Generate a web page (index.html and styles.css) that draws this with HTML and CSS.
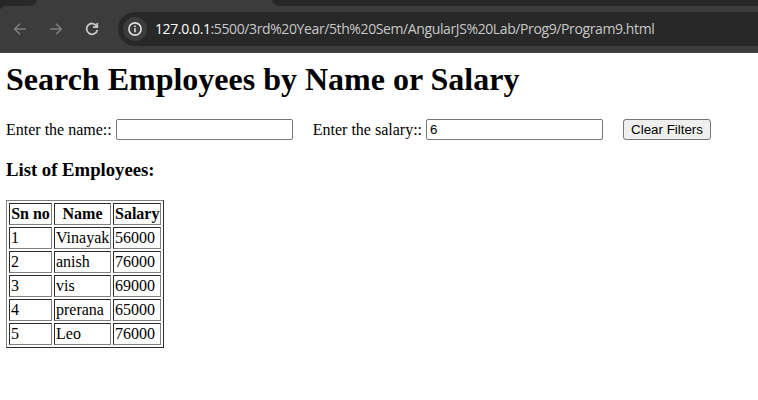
FILE: index.html
```html
<!DOCTYPE html>
<html lang="en">
<head>
<meta charset="utf-8">
<title>Search Employees</title>
<link rel="stylesheet" href="styles.css">
</head>
<body>
<header class="browser">
  <div class="tabs"><span class="tab-left"></span><span class="tab-right"></span></div>
  <div class="toolbar">
    <svg class="nav" viewBox="0 0 16 16"><path d="M14 8H3M8 2.7 2.7 8 8 13.3"/></svg>
    <svg class="nav" viewBox="0 0 16 16"><path d="M2 8h11M8 2.7 13.3 8 8 13.3"/></svg>
    <svg class="nav reload" viewBox="0 0 16 16"><path d="M12.7 5.2A5.4 5.4 0 1 0 13.3 9M13.3 2v4.2H9"/></svg>
    <div class="address">
      <span class="info"><svg viewBox="0 0 16 16"><circle cx="8" cy="8" r="6.1"/><path d="M8 7.3v4M8 4.6v1.6"/></svg></span>
      <span class="url"><span class="host">127.0.0.1</span>:5500/3rd%20Year/5th%20Sem/AngularJS%20Lab/Prog9/Program9.html</span>
    </div>
  </div>
</header>
<main>
  <h1>Search Employees by Name or Salary</h1>
  <div class="filters">
    <label>Enter the name:: <input type="text"></label>
    <label>Enter the salary:: <input type="text" value="6"></label>
    <button>Clear Filters</button>
  </div>
  <h3>List of Employees:</h3>
  <table border="1">
    <colgroup><col class="col-no"><col class="col-name"><col class="col-salary"></colgroup>
    <tr><th>Sn no</th><th>Name</th><th>Salary</th></tr>
    <tr><td>1</td><td>Vinayak</td><td>56000</td></tr>
    <tr><td>2</td><td>anish</td><td>76000</td></tr>
    <tr><td>3</td><td>vis</td><td>69000</td></tr>
    <tr><td>4</td><td>prerana</td><td>65000</td></tr>
    <tr><td>5</td><td>Leo</td><td>76000</td></tr>
  </table>
</main>
</body>
</html>
```

FILE: styles.css
```css
body {
  margin: 0;
  background: #fff;
  color: #000;
  font: 16px "Liberation Serif", serif;
  overflow: hidden;
}
.browser {
  height: 53px;
  box-sizing: border-box;
  border-bottom: 1px solid #454545;
  background: radial-gradient(circle at 7px 7px, transparent 7px, #282828 7.5px) 0 6px / 7px 3px no-repeat #3c3c3c;
}
.tabs {
  display: flex;
  justify-content: space-between;
  height: 6px;
}
.tab-left {
  width: 37px;
  background: #282828;
  border-bottom-right-radius: 8px 6px;
}
.tab-right {
  width: 486px;
  background: #282828;
  border-bottom-left-radius: 8px 6px;
}
.toolbar {
  display: flex;
  align-items: center;
  height: 34px;
  margin-top: 6px;
  padding-left: 12px;
}
.nav {
  width: 16px;
  height: 16px;
  margin-right: 20px;
  fill: none;
  stroke: #7d7d7d;
  stroke-width: 1.6;
}
.reload {
  margin-right: 18px;
  stroke: #c7c7c7;
  stroke-width: 1.8;
}
.address {
  flex: 1;
  display: flex;
  align-items: center;
  height: 34px;
  border-radius: 17px 0 0 17px;
  background: #282828;
}
.info {
  display: flex;
  align-items: center;
  justify-content: center;
  width: 24px;
  height: 24px;
  margin: 0 8px 0 5px;
  border-radius: 50%;
  background: #3c3c3c;
}
.info svg {
  width: 16px;
  height: 16px;
  fill: none;
  stroke: #dedede;
  stroke-width: 1.6;
}
.url {
  padding-bottom: 1px;
  color: #c7c7c7;
  font: 14px "Open Sans", sans-serif;
  letter-spacing: -0.39px;
  white-space: nowrap;
}
.host {
  color: #fff;
}
main {
  padding: 8px 6px;
}
h1 {
  margin: 0 0 21px;
  font-size: 32px;
  line-height: 37px;
}
.filters {
  display: flex;
  align-items: center;
  gap: 20px;
  height: 21px;
  white-space: nowrap;
}
label {
  display: flex;
  align-items: center;
  gap: 4px;
  line-height: 20px;
}
input {
  width: 177px;
  height: 21px;
  box-sizing: border-box;
  border: 1px solid #767676;
  border-radius: 2px;
  padding: 1px 3px;
  font: 13.333px "Liberation Sans", sans-serif;
}
button {
  width: 88px;
  height: 21px;
  border: 1px solid #767676;
  border-radius: 3px;
  padding: 0;
  background: #efefef;
  color: #000;
  font: 13.333px "Liberation Sans", sans-serif;
}
h3 {
  margin: 19px 0 20px;
  font-size: 18.72px;
  line-height: 21px;
}
table {
  width: 158px;
  table-layout: fixed;
  white-space: nowrap;
}
.col-no {
  width: 43px;
}
.col-name {
  width: 57px;
}
.col-salary {
  width: 48px;
}
td, th {
  height: 18px;
  line-height: 18px;
}
```
